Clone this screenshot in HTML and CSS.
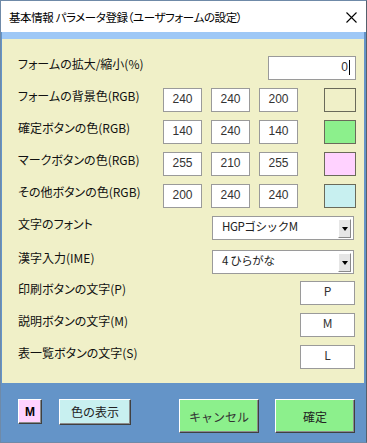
FILE: index.html
```html
<!DOCTYPE html>
<html lang="ja">
<head>
  <meta charset="UTF-8" />
  <title>基本情報 パラメータ登録</title>
  <link rel="stylesheet" href="styles.css">
</head>
<body>
  <div class="window">
    <div class="titlebar">
      <span class="title">基本情報 パラメータ登録（ユーザフォームの設定）</span>
      <svg class="close" width="11" height="11" viewBox="0 0 11 11">
        <path d="M0.5 0.5 L10.5 10.5 M10.5 0.5 L0.5 10.5" stroke="#000" stroke-width="1.1" fill="none"/>
      </svg>
    </div>

    <div class="client">
      <div class="strip"></div>
      <div class="panel">
        <div class="row">
          <span class="label">フォームの拡大/縮小(%)</span>
          <div class="field zoom">0<span class="caret"></span></div>
        </div>

        <div class="row">
          <span class="label">フォームの背景色(RGB)</span>
          <div class="field rgb">240</div>
          <div class="field rgb">240</div>
          <div class="field rgb">200</div>
          <div class="swatch bg-form"></div>
        </div>

        <div class="row">
          <span class="label">確定ボタンの色(RGB)</span>
          <div class="field rgb">140</div>
          <div class="field rgb">240</div>
          <div class="field rgb">140</div>
          <div class="swatch bg-ok"></div>
        </div>

        <div class="row">
          <span class="label">マークボタンの色(RGB)</span>
          <div class="field rgb">255</div>
          <div class="field rgb">210</div>
          <div class="field rgb">255</div>
          <div class="swatch bg-mark"></div>
        </div>

        <div class="row">
          <span class="label">その他ボタンの色(RGB)</span>
          <div class="field rgb">200</div>
          <div class="field rgb">240</div>
          <div class="field rgb">240</div>
          <div class="swatch bg-other"></div>
        </div>

        <div class="row row-font">
          <span class="label">文字のフォント</span>
          <div class="combo">
            <span class="combo-text">HGPゴシックM</span>
            <span class="combo-btn"><span class="arrow"></span></span>
          </div>
        </div>

        <div class="row row-ime">
          <span class="label">漢字入力(IME)</span>
          <div class="combo">
            <span class="combo-text">4 ひらがな</span>
            <span class="combo-btn"><span class="arrow"></span></span>
          </div>
        </div>

        <div class="row row-p">
          <span class="label">印刷ボタンの文字(P)</span>
          <div class="field letter">P</div>
        </div>

        <div class="row">
          <span class="label">説明ボタンの文字(M)</span>
          <div class="field letter">M</div>
        </div>

        <div class="row">
          <span class="label">表一覧ボタンの文字(S)</span>
          <div class="field letter">L</div>
        </div>
      </div>

      <div class="buttons">
        <button class="btn btn-mark">M</button>
        <button class="btn btn-color">色の表示</button>
        <button class="btn btn-ok btn-cancel">キャンセル</button>
        <button class="btn btn-ok">確定</button>
      </div>
    </div>
  </div>
</body>
</html>
```

FILE: styles.css
```css
* {
  margin: 0;
  padding: 0;
  box-sizing: border-box;
}
body {
  font-family: "Noto Sans CJK JP", "Noto Sans", sans-serif;
  font-size: 12px;
  background: #fff;
}
.window {
  width: 367px;
  height: 443px;
  border: 1px solid #6f8aa8;
  border-right-color: #55606c;
  display: flex;
  flex-direction: column;
}
.titlebar {
  height: 31px;
  background: #fff;
  display: flex;
  align-items: center;
  justify-content: space-between;
  padding: 0 9px 0 8px;
}
.title {
  font-size: 11.5px;
  font-feature-settings: "palt";
  color: #000;
  letter-spacing: -0.4px;
}
.close {
  margin-top: 1px;
}
.client {
  flex: 1;
  background: #6494c8;
  display: flex;
  flex-direction: column;
  padding: 0 2px 0 1px;
}
.strip {
  height: 7px;
  background: #9ec8f6;
}
.panel {
  height: 344px;
  background: #f0f0c8;
  padding: 17px 8px 0 16px;
  display: flex;
  flex-direction: column;
  gap: 8px;
}
.row {
  display: flex;
  align-items: flex-start;
  height: 24px;
}
.row-ime {
  margin-top: 2px;
}
.row-p {
  margin-top: -1px;
}
.label {
  width: 145px;
  flex: none;
  line-height: 14px;
  padding-top: 1px;
  font-feature-settings: "palt";
  color: #111;
  white-space: nowrap;
}
.field {
  height: 24px;
  background: #fff;
  border: 1px solid #9a9a9a;
  font-family: "Liberation Sans", sans-serif;
  font-size: 12px;
  color: #333;
  line-height: 20px;
  text-align: center;
}
.zoom {
  width: 88px;
  margin-left: auto;
  padding-right: 5px;
  display: flex;
  justify-content: flex-end;
  align-items: flex-start;
}
.caret {
  width: 1px;
  height: 15px;
  margin-top: 3px;
  margin-left: 1px;
  background: #000;
}
.rgb {
  width: 39px;
  margin-right: 9px;
}
.swatch {
  width: 32px;
  height: 24px;
  border: 1px solid #6a6a5a;
  margin-left: auto;
}
.bg-form { background: #f0f0c8; }
.bg-ok { background: #8cf08c; }
.bg-mark { background: #ffd2ff; }
.bg-other { background: #c8f0f0; }
.combo {
  width: 142px;
  height: 24px;
  margin-left: auto;
  margin-right: 2px;
  background: #fff;
  border: 1px solid #9a9a9a;
  display: flex;
  align-items: center;
  justify-content: space-between;
  padding: 0 2px 0 9px;
}
.combo-text {
  font-size: 11.5px;
  color: #222;
  letter-spacing: -0.4px;
  margin-top: -4px;
}
.combo-btn {
  width: 13px;
  height: 19px;
  background: #e6e6e6;
  border-top: 1px solid #fff;
  border-left: 1px solid #fff;
  border-right: 1px solid #8a8a8a;
  border-bottom: 1px solid #8a8a8a;
  display: flex;
  align-items: center;
  justify-content: center;
}
.arrow {
  width: 0;
  height: 0;
  border-left: 3.5px solid transparent;
  border-right: 3.5px solid transparent;
  border-top: 4px solid #000;
  margin-top: 2px;
}
.letter {
  width: 55px;
  margin-left: auto;
  margin-right: 1px;
  font-family: "Noto Sans CJK JP", sans-serif;
  line-height: 18px;
}
.buttons {
  flex: 1;
  display: flex;
  align-items: flex-start;
  padding: 16px 0 0 16px;
}
.btn {
  font-family: "Noto Sans CJK JP", sans-serif;
  font-size: 12px;
  color: #222;
  border-top: 1px solid #fff;
  border-left: 1px solid #fff;
  border-right: 1px solid #404040;
  border-bottom: 1px solid #404040;
  box-shadow: inset -1px -1px #8c8c8c;
  cursor: pointer;
}
.btn-mark {
  width: 24px;
  height: 25px;
  background: #ffd2ff;
  font-family: "Liberation Sans", sans-serif;
  font-weight: bold;
  font-size: 12px;
  color: #000;
}
.btn-color {
  width: 72px;
  height: 26px;
  margin-left: 17px;
  background: #c8f0f0;
  padding-bottom: 2px;
}
.btn-ok {
  width: 80px;
  height: 34px;
  background: #8cf08c;
  margin-left: 16px;
}
.btn-cancel {
  margin-left: 48px;
  color: #333;
}
```
